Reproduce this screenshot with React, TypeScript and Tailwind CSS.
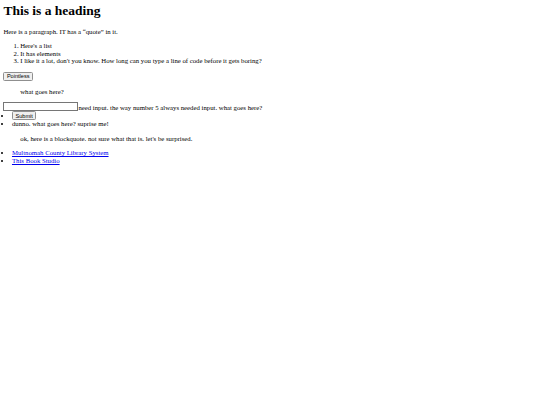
import React from 'react';

const btn =
  "font-['Liberation_Sans',Arial,sans-serif] text-[5.6px] leading-[1.15] bg-[#efefef] border border-[#8f8f8f] rounded-[1.5px] px-[2.5px] py-[0.5px] text-black";

function App() {
  return (
    <div className="min-h-screen bg-white p-[3.375px] font-['Liberation_Serif','Times_New_Roman',serif] text-[6.75px] leading-[1.12] text-black">
      <h1 className="mb-[9px] text-[13.5px] font-bold leading-[1.15]">This is a heading</h1>
      <p className="mb-[6.75px]">Here is a paragraph. IT has a “quote” in it.</p>

      <ol className="mb-[6.75px] list-decimal pl-[16.875px]">
        <li>Here's a list</li>
        <li>It has elements</li>
        <li>I like it a lot, don't you know. How long can you type a line of code before it gets boring?</li>
      </ol>

      <button className={btn}>Pointless</button>

      <blockquote className="mx-[16.875px] my-[6.75px]">what goes here?</blockquote>

      <div className="flex items-end">
        <input
          type="text"
          className="h-[9px] w-[75px] border border-[#767676] bg-white text-[5.6px]"
        />
        <span>need input. the way number 5 always needed input. what goes here?</span>
      </div>

      {/* submit + note */}
      <ul className="list-disc pl-[8.6px]">
        <li>
          <button className={btn}>Submit</button>
        </li>
        <li>dunno. what goes here? suprise me!</li>
      </ul>

      <blockquote className="mx-[16.875px] my-[6.75px]">
        ok, here is a blockquote. not sure what that is. let's be surprised.
      </blockquote>

      <ul className="list-disc pl-[8.6px]">
        <li>
          <a href="#" className="text-[#0000ee] underline">Multnomah County Library System</a>
        </li>
        <li>
          <a href="#" className="text-[#0000ee] underline">This Book Studio</a>
        </li>
      </ul>
    </div>
  );
}

export default App;
